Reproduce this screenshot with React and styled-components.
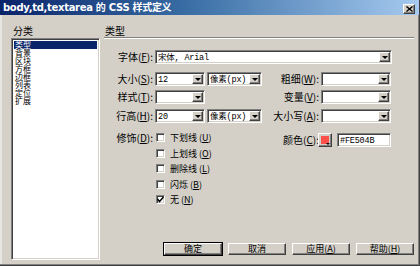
import React from 'react';
import styled, { createGlobalStyle } from 'styled-components';

const GlobalStyle = createGlobalStyle`
  html, body {
    margin: 0;
    padding: 0;
    background: #d4d0c8;
    overflow: hidden;
  }
  body {
    font-family: "Noto Sans CJK SC", "DejaVu Sans", sans-serif;
    font-size: 10px;
    color: #000;
  }
  #root {
    width: 420px;
    height: 266px;
  }
`;

const raised = `
  border: 1px solid;
  border-color: #fff #404040 #404040 #fff;
  box-shadow: inset -1px -1px #808080;
  background: #d4d0c8;
`;

const sunken = `
  border: 1px solid;
  border-color: #808080 #fff #fff #808080;
  box-shadow: inset 1px 1px #404040, inset -1px -1px #d4d0c8;
  background: #fff;
`;

const Window = styled.div`
  width: 420px;
  height: 266px;
  box-sizing: border-box;
  display: flex;
  flex-direction: column;
  background: #d4d0c8;
  border-right: 1px solid #404040;
  border-bottom: 1px solid #404040;
  box-shadow: inset -1px -1px #808080, inset 2px 0 #e8e6e0;
`;

const TitleBar = styled.div`
  height: 15px;
  flex: none;
  display: flex;
  align-items: center;
  padding: 0 4px 0 3px;
  background: linear-gradient(to right, #0a246a 0%, #3a6ea5 45%, #a6caf0 100%);
`;

const Title = styled.div`
  flex: 1;
  color: #fff;
  font-family: "DejaVu Sans", "Noto Sans CJK SC", sans-serif;
  font-weight: bold;
  font-size: 10px;
  letter-spacing: -0.3px;
  line-height: 15px;
  white-space: nowrap;
`;

const CloseButton = styled.div`
  ${raised}
  width: 12px;
  height: 10px;
  box-sizing: border-box;
  display: flex;
  align-items: center;
  justify-content: center;
  margin-top: 2px;
`;

const Body = styled.div`
  flex: 1;
  display: flex;
  padding: 10px 2px 5px 11px;
  min-height: 0;
`;

const Sidebar = styled.div`
  width: 89px;
  flex: none;
  display: flex;
  flex-direction: column;
`;

const GroupLabel = styled.div`
  height: 12px;
  line-height: 12px;
  padding-left: 2px;
  font-size: 10px;
`;

const ListBox = styled.div`
  ${sunken}
  flex: 1;
  margin-top: 1px;
  padding: 2px 2px;
  display: flex;
  flex-direction: column;
`;

const ListItem = styled.div`
  height: 8px;
  line-height: 8px;
  font-size: 8px;
  padding-left: 1px;
  white-space: nowrap;
  background: ${({ $selected }) => ($selected ? '#0a246a' : 'transparent')};
  color: ${({ $selected }) => ($selected ? '#fff' : '#000')};
`;

const Main = styled.div`
  flex: 1;
  display: flex;
  flex-direction: column;
  margin-left: 4px;
  padding-right: 3px;
`;

const Heading = styled.div`
  height: 12px;
  line-height: 12px;
  padding-left: 1px;
`;

const Separator = styled.div`
  height: 0;
  border-top: 1px solid #808080;
  border-bottom: 1px solid #fff;
`;

const Row = styled.div`
  display: flex;
  align-items: flex-start;
  margin-top: ${({ $gap }) => $gap}px;
`;

const Label = styled.div`
  width: 49px;
  flex: none;
  text-align: right;
  height: ${({ $h }) => $h || 14}px;
  line-height: ${({ $h }) => $h || 14}px;
  white-space: nowrap;
  margin-right: 2px;
`;

const RightLabel = styled(Label)`
  width: 57px;
  margin-right: ${({ $pad }) => ($pad == null ? 2 : $pad)}px;
`;

const LeftGroup = styled.div`
  width: 107px;
  flex: none;
  display: flex;
  gap: 2px;
`;

const Combo = styled.div`
  ${sunken}
  width: ${({ $w }) => $w}px;
  height: 14px;
  box-sizing: border-box;
  display: flex;
  align-items: stretch;
  padding: 1px;
`;

const ComboText = styled.div`
  flex: 1;
  padding-left: 1px;
  font-family: "Liberation Mono", "Noto Sans CJK SC", monospace;
  font-size: 8.5px;
  letter-spacing: -0.2px;
  line-height: 12px;
  white-space: nowrap;
  overflow: hidden;
`;

const ArrowButton = styled.div`
  ${raised}
  width: 11px;
  box-sizing: border-box;
  flex: none;
  display: flex;
  align-items: center;
  justify-content: center;

  &::after {
    content: '';
    border-left: 3px solid transparent;
    border-right: 3px solid transparent;
    border-top: 3px solid #000;
  }
`;

const Underline = styled.span`
  text-decoration: underline;
`;

const CheckList = styled.div`
  display: flex;
  flex-direction: column;
  gap: 6.5px;
  padding-left: 1px;
  width: 106px;
  flex: none;
`;

const CheckRow = styled.div`
  display: flex;
  align-items: center;
  gap: 5px;
  height: 9px;
  line-height: 9px;
  font-size: 9px;
  white-space: nowrap;
`;

const CheckBox = styled.div`
  ${sunken}
  width: 9px;
  height: 9px;
  box-sizing: border-box;
  flex: none;
  display: flex;
  align-items: center;
  justify-content: center;
`;

const Swatch = styled.div`
  ${raised}
  width: 14px;
  height: 14px;
  box-sizing: border-box;
  padding: 2px;
  position: relative;

  &::after {
    content: '';
    position: absolute;
    right: 1px;
    bottom: 1px;
    border-left: 2px solid transparent;
    border-right: 2px solid transparent;
    border-top: 2px solid #000;
  }
`;

const SwatchFill = styled.div`
  width: 100%;
  height: 100%;
  background: ${({ $color }) => $color};
`;

const TextBox = styled(Combo)`
  margin-left: 5px;
`;

const ButtonBar = styled.div`
  margin-top: auto;
  margin-bottom: 5px;
  display: flex;
  justify-content: flex-end;
  gap: 6px;
`;

const Button = styled.div`
  ${raised}
  width: 58px;
  height: 12px;
  box-sizing: border-box;
  text-align: center;
  font-size: 9px;
  line-height: 10px;
  outline: ${({ $default }) => ($default ? '1px solid #000' : 'none')};
`;

const categories = ['类型', '背景', '区块', '方框', '边框', '列表', '定位', '扩展'];

const decorations = [
  { label: '下划线', key: 'U' },
  { label: '上划线', key: 'O' },
  { label: '删除线', key: 'L' },
  { label: '闪烁', key: 'B' },
  { label: '无', key: 'N', checked: true },
];

const Key = ({ k }) => (
  <>
    (<Underline>{k}</Underline>):
  </>
);

const Select = ({ w, text }) => (
  <Combo $w={w}>
    <ComboText>{text}</ComboText>
    <ArrowButton />
  </Combo>
);

export default function App() {
  return (
    <>
      <GlobalStyle />
      <Window>
        <TitleBar>
          <Title>body,td,textarea 的 CSS 样式定义</Title>
          <CloseButton>
            <svg width="7" height="6" viewBox="0 0 7 6">
              <path d="M0.5 0.5 L6.5 5.5 M6.5 0.5 L0.5 5.5" stroke="#000" strokeWidth="1.4" />
            </svg>
          </CloseButton>
        </TitleBar>
        <Body>
          <Sidebar>
            <GroupLabel>分类</GroupLabel>
            <ListBox>
              {categories.map((c, i) => (
                <ListItem key={c} $selected={i === 0}>{c}</ListItem>
              ))}
            </ListBox>
          </Sidebar>
          <Main>
            <Heading>类型</Heading>
            <Separator />

            <Row $gap={11}>
              <Label>字体<Key k="F" /></Label>
              <Select w={237} text="宋体, Arial" />
            </Row>

            <Row $gap={8}>
              <Label>大小<Key k="S" /></Label>
              <LeftGroup>
                <Select w={50} text="12" />
                <Select w={55} text="像素(px)" />
              </LeftGroup>
              <RightLabel>粗细<Key k="W" /></RightLabel>
              <Select w={70} text="" />
            </Row>

            <Row $gap={4}>
              <Label>样式<Key k="T" /></Label>
              <LeftGroup>
                <Select w={50} text="" />
              </LeftGroup>
              <RightLabel>变量<Key k="V" /></RightLabel>
              <Select w={70} text="" />
            </Row>

            <Row $gap={5}>
              <Label>行高<Key k="H" /></Label>
              <LeftGroup>
                <Select w={50} text="20" />
                <Select w={55} text="像素(px)" />
              </LeftGroup>
              <RightLabel>大小写<Key k="A" /></RightLabel>
              <Select w={70} text="" />
            </Row>

            <Row $gap={10}>
              <Label $h={9}>修饰<Key k="D" /></Label>
              <CheckList>
                {decorations.map((d) => (
                  <CheckRow key={d.key}>
                    <CheckBox>
                      {d.checked && (
                        <svg width="7" height="7" viewBox="0 0 7 7">
                          <path d="M0.5 3 L2.5 5.5 L6.5 1" stroke="#000" strokeWidth="1.5" fill="none" />
                        </svg>
                      )}
                    </CheckBox>
                    <span>
                      {d.label} (<Underline>{d.key}</Underline>)
                    </span>
                  </CheckRow>
                ))}
              </CheckList>
              <RightLabel $pad={-1}>颜色<Key k="C" /></RightLabel>
              <Swatch>
                <SwatchFill $color="#fe504b" />
              </Swatch>
              <TextBox $w={54}>
                <ComboText>#FE504B</ComboText>
              </TextBox>
            </Row>

            <ButtonBar>
              <Button $default>确定</Button>
              <Button>取消</Button>
              <Button>应用(<Underline>A</Underline>)</Button>
              <Button>帮助(<Underline>H</Underline>)</Button>
            </ButtonBar>
          </Main>
        </Body>
      </Window>
    </>
  );
}
